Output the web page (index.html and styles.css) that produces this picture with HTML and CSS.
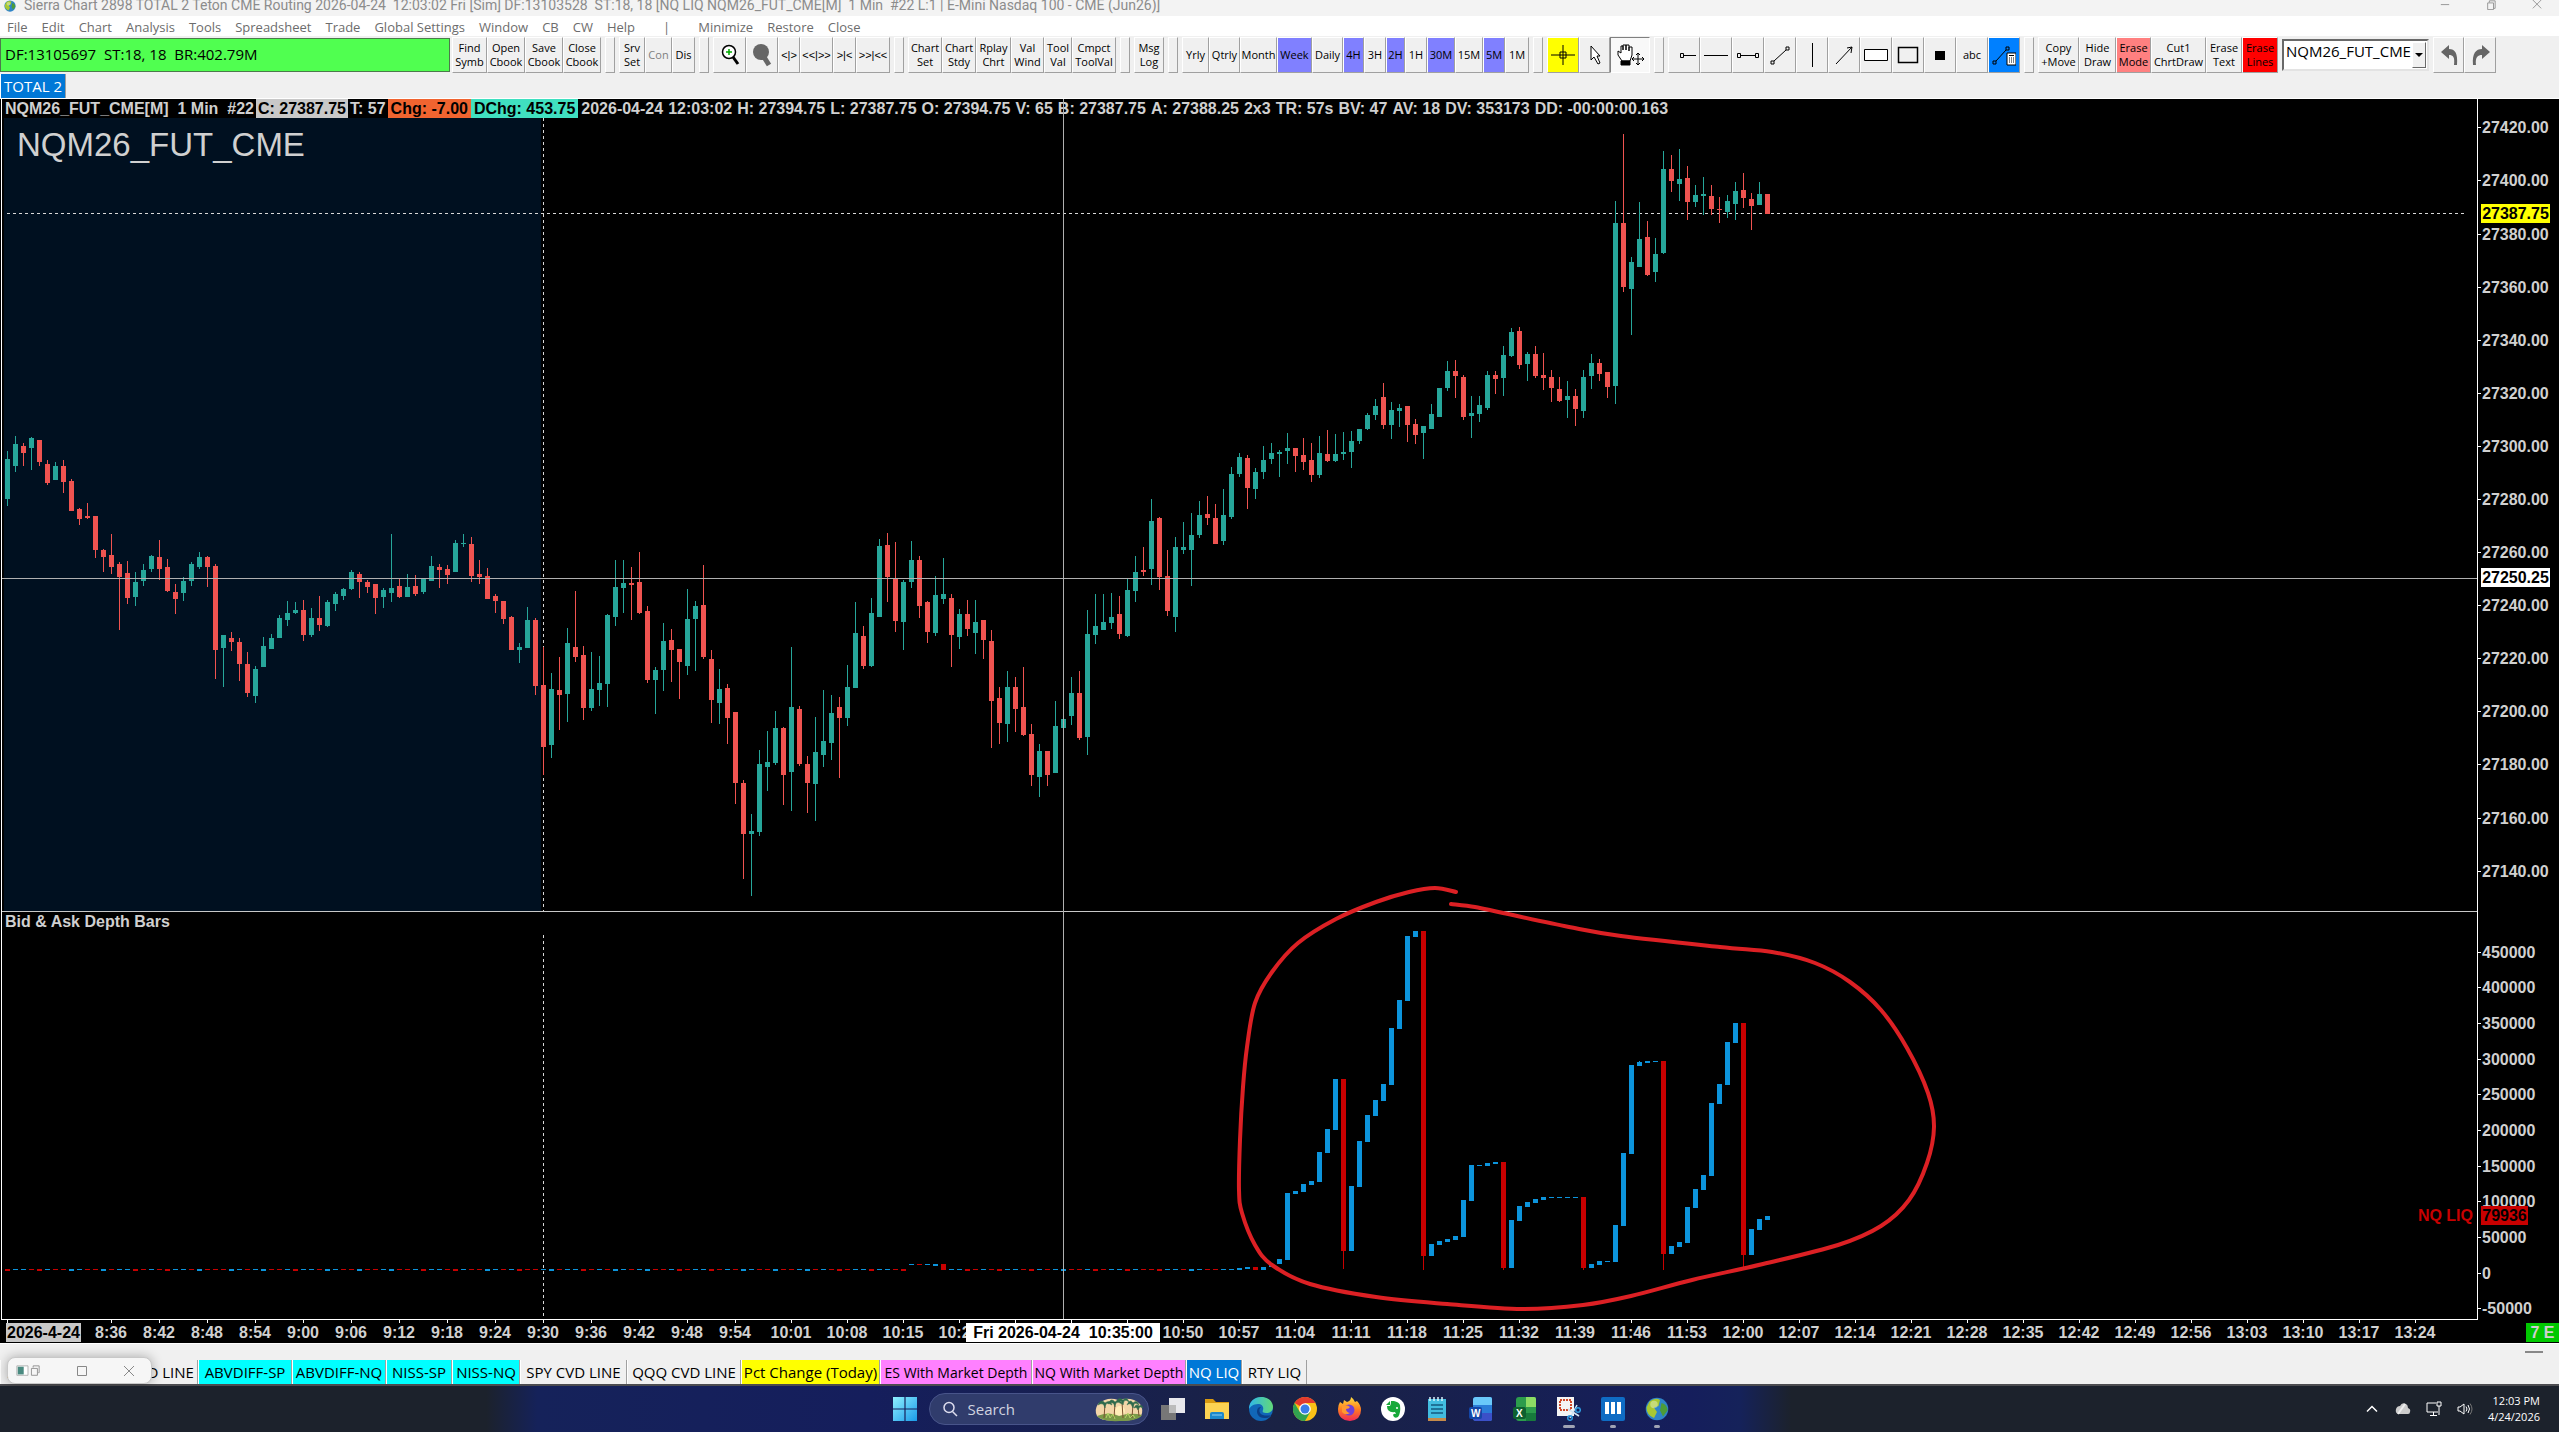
FILE: index.html
```html
<!DOCTYPE html>
<html lang="en">

<head>
    <meta charset="UTF-8" />
    <meta name="viewport" content="width=device-width, initial-scale=1.0" />
    <title>Sierra Chart</title>
    <link rel="stylesheet" href="styles.css">
    <script src="script.js" defer></script>
</head>

<body>

    <header class="title_bar">
        <svg class="app_icon" viewBox="0 0 16 16"><use href="#globe" /></svg>
        <span class="title_text">Sierra Chart 2898 TOTAL 2 Teton CME Routing 2026-04-24&nbsp; 12:03:02 Fri [Sim] DF:13103528&nbsp; ST:18, 18 [NQ LIQ NQM26_FUT_CME[M]&nbsp; 1 Min&nbsp; #22 L:1 | E-Mini Nasdaq 100 - CME (Jun26)]</span>
        <div class="win_controls">
            <button aria-label="Minimize"><svg viewBox="0 0 12 12"><path d="M1 5.5h10" /></svg></button>
            <button aria-label="Restore"><svg viewBox="0 0 12 12"><path d="M2 3.5h7v8H2zM4 3V1h7v9H9.5" /></svg></button>
            <button aria-label="Close"><svg viewBox="0 0 12 12"><path d="M1 0l10 10M11 0L1 10" /></svg></button>
        </div>
    </header>

    <nav class="menu">
        <a href="#">File</a>
        <a href="#">Edit</a>
        <a href="#">Chart</a>
        <a href="#">Analysis</a>
        <a href="#">Tools</a>
        <a href="#">Spreadsheet</a>
        <a href="#">Trade</a>
        <a href="#">Global Settings</a>
        <a href="#">Window</a>
        <a href="#">CB</a>
        <a href="#">CW</a>
        <a href="#">Help</a>
        <span class="bar">|</span>
        <a href="#">Minimize</a>
        <a href="#">Restore</a>
        <a href="#">Close</a>
    </nav>

    <div class="toolbar">
        <div class="feed">DF:13105697&nbsp; ST:18, 18&nbsp; BR:402.79M</div>
        <div class="group cbook">
            <button>Find<br>Symb</button>
            <button>Open<br>Cbook</button>
            <button>Save<br>Cbook</button>
            <button>Close<br>Cbook</button>
        </div>
        <i class="grip"></i>
        <div class="group server">
            <button>Srv<br>Set</button>
            <button disabled>Con</button>
            <button>Dis</button>
        </div>
        <i class="grip"></i>
        <div class="group zoom">
            <button aria-label="Zoom in"><svg viewBox="0 0 24 24"><circle cx="11" cy="9" r="6.5" fill="#fff" stroke="#000" stroke-width="1.5" /><path d="M15 14l5 7" stroke="#000" stroke-width="3" /><path d="M8 9h6M11 6v6" stroke="#0a0" stroke-width="1.5" /></svg></button>
            <button aria-label="Zoom out"><svg viewBox="0 0 24 24"><circle cx="11" cy="9" r="8" fill="#666" /><path d="M14 14l5 8" stroke="#666" stroke-width="5" /></svg></button>
            <button>&lt;|&gt;</button>
            <button>&lt;&lt;|&gt;&gt;</button>
            <button>&gt;|&lt;</button>
            <button>&gt;&gt;|&lt;&lt;</button>
        </div>
        <i class="grip"></i>
        <div class="group chart_tools">
            <button>Chart<br>Set</button>
            <button>Chart<br>Stdy</button>
            <button>Rplay<br>Chrt</button>
            <button>Val<br>Wind</button>
            <button>Tool<br>Val</button>
            <button>Cmpct<br>ToolVal</button>
        </div>
        <i class="grip"></i>
        <div class="group log">
            <button>Msg<br>Log</button>
        </div>
        <i class="grip"></i>
        <div class="group periods">
            <button>Yrly</button>
            <button>Qtrly</button>
            <button>Month</button>
            <button class="violet">Week</button>
            <button>Daily</button>
            <button class="violet">4H</button>
            <button>3H</button>
            <button class="violet">2H</button>
            <button>1H</button>
            <button class="violet">30M</button>
            <button>15M</button>
            <button class="violet">5M</button>
            <button>1M</button>
        </div>
        <i class="grip"></i>
        <div class="group pointers">
            <button class="yellow" aria-label="Crosshair"><svg viewBox="0 0 24 24" class="ink"><path d="M0 12h24M12 2v20" /><path d="M9 9h6v6H9z" /></svg></button>
            <button aria-label="Pointer"><svg viewBox="0 0 24 24" class="ink"><path d="M8 3v14l3-3 4 7 2-1-3-7h3z" fill="#fff" /></svg></button>
            <button class="pressed" aria-label="Hand"><svg viewBox="0 0 32 24" class="ink"><path d="M8 18l-4-6V8l3 2V3h2v4-5h3v5-5h3v6-4h3v8l-2 6z" fill="#fff" /><path d="M7 18h9v4H7z" fill="#000" /><path d="M24 10v12M18 16h12M22 12l2-2 2 2M22 20l2 2 2-2M20 14l-2 2 2 2M28 14l2 2-2 2" /></svg></button>
        </div>
        <i class="grip"></i>
        <div class="group drawing">
            <button aria-label="Ray"><svg viewBox="0 0 24 24" class="ink"><path d="M8.5 10.5h3v4h-3zM12 12.5h12" /></svg></button>
            <button aria-label="Horizontal line"><svg viewBox="0 0 24 24" class="ink"><path d="M0 12.5h24" /></svg></button>
            <button aria-label="Segment"><svg viewBox="0 0 24 24" class="ink"><path d="M1.5 10.500h3v4h-3zM5 12.500h15M19.5 10.500h3v4h-3z" /></svg></button>
            <button aria-label="Trend line"><svg viewBox="0 0 24 24" class="ink"><path d="M3 18h3v3H3zM18 4h3v3h-3zM6 18L18 7" /></svg></button>
            <button aria-label="Vertical line"><svg viewBox="0 0 24 24" class="ink"><path d="M12.5 0v24" /></svg></button>
            <button aria-label="Arrow"><svg viewBox="0 0 24 24" class="ink"><path d="M4 21L20 4M15 5l5-1-1 6" /></svg></button>
            <button aria-label="Rectangle"><svg viewBox="0 0 24 24" class="ink"><path d="M.5 6.500h23v11H.5z" fill="#fff" /></svg></button>
            <button aria-label="Square"><svg viewBox="0 0 24 24" class="ink"><path d="M2.500 4.500h19v15h-19z" stroke-width="1.500" /></svg></button>
            <button aria-label="Marker"><svg viewBox="0 0 24 24"><path d="M7 8h10v9H7z" /></svg></button>
            <button>abc</button>
            <button class="blue" aria-label="Calculator"><svg viewBox="0 0 24 24" class="ink"><path d="M1 18h3v3H1zM14 4h3v3h-3zM4 18L14 7" /><path d="M15 10h9v12h-9z" fill="#fff" /><path d="M17 12.500h5M17 15h1M19 15h1M21 15h1M17 17h1M19 17h1M21 17h1M17 19h1M19 19h1M21 19h1" /></svg></button>
        </div>
        <i class="grip"></i>
        <div class="group edit">
            <button>Copy<br>+Move</button>
            <button>Hide<br>Draw</button>
            <button class="pink">Erase<br>Mode</button>
            <button>Cut1<br>ChrtDraw</button>
            <button>Erase<br>Text</button>
            <button class="red">Erase<br>Lines</button>
        </div>
        <div class="symbol">
            <select aria-label="Symbol">
                <option>NQM26_FUT_CME</option>
            </select>
            <i class="arrow"></i>
        </div>
        <div class="group history">
            <button aria-label="Undo"><svg viewBox="0 0 24 24"><path d="M4 9l8-7v4c6 0 9 4 8 16h-3c1-8-1-10-5-10v4z" fill="#666" /></svg></button>
            <button aria-label="Redo"><svg viewBox="0 0 24 24"><path d="M22 9l-8-7v4C8 6 4 10 5 22h3c-1-8 2-10 6-10v4z" fill="#666" /></svg></button>
        </div>
    </div>

    <div class="book_tabs">
        <button class="tab active">TOTAL 2</button>
    </div>

    <main class="chart">
        <div class="quote">
            <span>NQM26_FUT_CME[M]&nbsp; 1 Min&nbsp; #22</span>
            <span class="q_close">C: 27387.75</span>
            <span>T: 57</span>
            <span class="q_chg">Chg: -7.00</span>
            <span class="q_dchg">DChg: 453.75</span>
            <div class="fields">
                <b>2026-04-24</b>
                <b>12:03:02</b>
                <b>H: 27394.75</b>
                <b>L: 27387.75</b>
                <b>O: 27394.75</b>
                <b>V: 65</b>
                <b>B: 27387.75</b>
                <b>A: 27388.25</b>
                <b>2x3</b>
                <b>TR: 57s</b>
                <b>BV: 47</b>
                <b>AV: 18</b>
                <b>DV: 353173</b>
                <b>DD: -00:00:00.163</b>
            </div>
        </div>
        <svg id="plot" class="plot" viewBox="0 99 2559 1244" preserveAspectRatio="xMinYMin meet"></svg>
    </main>

    <footer class="sheets">
        <button class="sheet_min" aria-label="Minimize sheet"></button>
        <div class="sheet_tabs">
            <button class="tab">ES CVD LINE</button>
            <button class="tab">NQ CVD LINE</button>
            <button class="tab cyan">ABVDIFF-SP</button>
            <button class="tab cyan">ABVDIFF-NQ</button>
            <button class="tab cyan">NISS-SP</button>
            <button class="tab cyan">NISS-NQ</button>
            <button class="tab">SPY CVD LINE</button>
            <button class="tab">QQQ CVD LINE</button>
            <button class="tab yellow">Pct Change (Today)</button>
            <button class="tab magenta">ES With Market Depth</button>
            <button class="tab magenta">NQ With Market Depth</button>
            <button class="tab active">NQ LIQ</button>
            <button class="tab">RTY LIQ</button>
        </div>
        <div class="mini_window">
            <svg viewBox="0 0 28 14"><path d="M1 1h13v11H1z" fill="#fff" stroke="#aaa" /><path d="M2 2h7v9H2z" fill="#4a8a80" /><path d="M18 4h7v8h-7zM20 3V1h7v8h-1" fill="none" stroke="#888" /></svg>
            <svg viewBox="0 0 12 12"><path d="M1.500 1.500h9v9h-9z" fill="none" stroke="#888" /></svg>
            <svg viewBox="0 0 12 12"><path d="M1 1l10 10M11 1L1 11" stroke="#888" /></svg>
        </div>
    </footer>

    <div class="taskbar">
        <div class="apps">
            <button aria-label="Start"><svg viewBox="0 0 24 24"><defs><linearGradient id="win" x2="1" y2="1"><stop stop-color="#8ff0ff" /><stop offset="1" stop-color="#1a9ae8" /></linearGradient></defs><path d="M0 0h11.400v11.400H0zM12.600 0H24v11.400H12.600zM0 12.600h11.400V24H0zM12.600 12.600H24V24H12.600z" fill="url(#win)" /></svg></button>
            <label class="search">
                <svg viewBox="0 0 16 16"><circle cx="7" cy="6.500" r="5" fill="none" stroke="#dde" stroke-width="1.500" /><path d="M10.500 10.500L15 15" stroke="#dde" stroke-width="1.500" /></svg>
                <input type="text" placeholder="Search">
                <svg class="palms" viewBox="0 0 50 26">
                    <path d="M4 8q10-8 20-4 14-4 22 4 4 6 1 12-10 6-22 4Q8 26 3 20 0 14 4 8z" fill="#f3d6a8" />
                    <circle cx="26" cy="15" r="5" fill="#ffedb8" />
                    <path d="M3 20q12-5 22 0 12-4 23-1-4 6-22 6Q8 26 3 20z" fill="#7a9a48" />
                    <path d="M10 22L11 8M20 22l1-15M29 22l-1-16M38 22l1-14M45 20l-1-9" stroke="#7c5230" />
                    <path d="M4 9q3-7 7-2 5-4 7 2-4-3-6-1-1 2-1 4-1-3-2-4-2-1-5 1zM14 8q3-7 7-2 5-4 7 2-4-3-6-1-1 2-1 4-1-3-2-4-2-1-5 1zM22 6q3-6 7-2 4-4 6 2-3-3-5-1l-1 4-2-4q-2-1-5 1zM33 9q3-7 6-2 4-4 6 2-3-3-5-1l-1 4-2-4q-2-1-4 1zM40 12q2-5 5-2 3-2 4 2-3-2-4 0l-1 2-1-2q-1-1-3 0z" fill="#2e6a4c" stroke="#2e6a4c" stroke-width=".5" />
                    <path d="M12 22l2-5 2 5 3-4 2 5M31 22l3-5 2 5 3-3 2 3" stroke="#b8d468" fill="none" />
                </svg>
            </label>
            <button aria-label="Task view"><svg viewBox="0 0 24 24"><path d="M8 1h16v15H8z" fill="#e8e8ec" /><path d="M0 8h15v15H0z" fill="#777" /><path d="M8 8h7v8H8z" fill="#bbb" /></svg></button>
            <button aria-label="Explorer"><svg viewBox="0 0 24 24"><path d="M0 2h8l3 3h13v6H0z" fill="#d99a10" /><path d="M0 6h24v16H0z" fill="#fcd353" /><path d="M5 22v-5q0-2 2-2h10q2 0 2 2v5z" fill="#1c88cc" /><path d="M7 18h10" stroke="#8ed0f4" /></svg></button>
            <button aria-label="Edge"><svg viewBox="0 0 24 24"><defs><linearGradient id="edge" x2="1"><stop stop-color="#30b7e8" /><stop offset="1" stop-color="#62d878" /></linearGradient></defs><circle cx="12" cy="12" r="12" fill="#1167b8" /><path d="M0 12C0 4 6 0 12 0c8 0 12 5 12 10 0 4-3 6-7 6-3 0-4-1-3-3 1-3-1-6-5-6-5 0-8 3-9 5z" fill="url(#edge)" /><path d="M9 11c-3 5 1 11 8 10 3 0 4-2 5-3-3 1-9 1-11-2-1-2-1-4 1-6-1 0-2 0-3 1z" fill="#0c3f86" /></svg></button>
            <button aria-label="Chrome"><svg viewBox="0 0 24 24"><circle cx="12" cy="12" r="12" fill="#fbc116" /><path d="M12 12L1.600 6A12 12 0 0 1 22.400 6H12z" fill="#e33b2e" /><path d="M1.600 6A12 12 0 0 0 12 24l5.200-9H6.800z" fill="#31a350" /><circle cx="12" cy="12" r="5.800" fill="#fff" /><circle cx="12" cy="12" r="4.500" fill="#3b7de9" /></svg></button>
            <button aria-label="Firefox"><svg viewBox="0 0 24 24"><defs><linearGradient id="fox" x2="0" y2="1"><stop stop-color="#ffe040" /><stop offset=".5" stop-color="#ff8020" /><stop offset="1" stop-color="#f02858" /></linearGradient></defs><path d="M3 5l3 2 1-4 3 2q4-1 4-5 3 2 4 5l2-1q4 4 4 9 0 10-11 11Q1 23 1 12q0-4 2-7z" fill="url(#fox)" /><circle cx="12" cy="13" r="5.500" fill="#7140d8" /><path d="M5 9q5-2 8 1-1 2-4 2 0 3 4 4-5 3-8-1z" fill="#ff9a30" /></svg></button>
            <button aria-label="Evernote"><svg viewBox="0 0 24 24"><circle cx="12" cy="12" r="12" fill="#fff" /><path d="M10 4h3q5 1 6 4 1 8-2 12-4 2-5-2 1-2 3-1l-1-2q-8 1-8-6h3q1-1 1-5z" fill="#18a83a" /><path d="M9 4v4H5z" fill="#18a83a" /><circle cx="16" cy="11" r="1" fill="#fff" /></svg></button>
            <button aria-label="Notepad"><svg viewBox="0 0 24 24"><path d="M3 2h18v20H3z" fill="#42bce0" /><path d="M3 21h18v3H3z" fill="#c58a4a" /><path d="M5 0v4M9 0v4M13 0v4M17 0v4" stroke="#d8f4fc" stroke-width="1.500" /><path d="M6 8h12M6 12h12M6 16h12" stroke="#155a80" stroke-width="1.500" /></svg></button>
            <button aria-label="Word"><svg viewBox="0 0 24 24"><path d="M4 3q0-3 3-3h14q2 0 2 2v20q0 2-2 2H7q-3 0-3-3z" fill="#2b7cd8" /><path d="M4 3q0-3 3-3h14q2 0 2 2v6H4z" fill="#6ac8fa" /><path d="M4 16h19v6q0 2-2 2H7q-3 0-3-3z" fill="#3b50c8" /><rect y="10" width="13" height="12" rx="2" fill="#1446a8" /><text x="2" y="20">W</text></svg></button>
            <button aria-label="Excel"><svg viewBox="0 0 24 24"><path d="M3 3q0-3 3-3h15q2 0 2 2v20q0 2-2 2H6q-3 0-3-3z" fill="#2c9c4c" /><path d="M13 0h8q2 0 2 2v8H13z" fill="#8cdc64" /><path d="M13 16h10v6q0 2-2 2h-8z" fill="#177a3c" /><rect y="10" width="13" height="12" rx="2" fill="#0e6030" /><text x="3" y="20">X</text></svg></button>
            <button class="open wide" aria-label="Snipping Tool"><svg viewBox="0 0 24 24"><path d="M0 0h17v19H0z" fill="#f4f4f4" /><path d="M3 3h11v10H3z" fill="none" stroke="#d04828" stroke-width="2" stroke-dasharray="2 1" /><path d="M20 8l-7 13M11 12l11 7" stroke="#cfe4f4" stroke-width="1.500" /><circle cx="13" cy="21" r="2.300" fill="none" stroke="#2f9be0" stroke-width="1.500" /><circle cx="21" cy="13" r="2.300" fill="none" stroke="#2f9be0" stroke-width="1.500" /></svg></button>
            <button class="open" aria-label="Panels"><svg viewBox="0 0 24 24"><rect width="24" height="24" rx="2" fill="#0f6cc4" /><path d="M6 5v12M12 5v12M18 5v12" stroke="#fff" stroke-width="4" /></svg></button>
            <button class="open" aria-label="Sierra Chart"><svg viewBox="0 0 16 16">
                    <symbol id="globe" viewBox="0 0 16 16">
                        <circle cx="8" cy="8" r="7.500" fill="#2f84c8" />
                        <path d="M3 3q4-3 7-1l-1 4-3 1 2 3-2 4Q1 12 1 7z" fill="#a8c832" />
                        <path d="M11 4q4 1 4 5l-3 4-2-4z" fill="#4c9c38" />
                        <circle cx="6" cy="5" r="2.500" fill="#fff" opacity=".35" />
                    </symbol>
                    <use href="#globe" />
                </svg></button>
        </div>
        <div class="tray">
            <svg viewBox="0 0 16 16"><path d="M3 10.500l5-5 5 5" fill="none" stroke="#fff" stroke-width="1.500" /></svg>
            <svg viewBox="0 0 16 16"><path d="M3 13q-3-1-2-5 1-3 4-3 2-4 6-2 2 1 2 4 3 1 2 4 0 2-2 2z" fill="#ccc" /><path d="M3 13l7-10" stroke="#eee" stroke-width="2" /></svg>
            <svg viewBox="0 0 16 16"><path d="M10 2H1v9h11M4 14.500h7M7.500 11v3M11 1h4v4h-4zM13 5v9" fill="none" stroke="#fff" /></svg>
            <svg viewBox="0 0 16 16"><path d="M1 6h2l4-3v10L3 10H1zM9 5.500q2 2.500 0 5M11 4q3 4 0 8" fill="none" stroke="#fff" /><path d="M13 2.500q4 5.500 0 11" fill="none" stroke="#777" /></svg>
            <div class="clock">12:03 PM<br>4/24/2026</div>
        </div>
    </div>

</body>

</html>
```

FILE: styles.css
```css
:root {
    --panel: #f0f0f0;
    --edge: #a0a0a0;
    --up: #26a69a;
    --down: #ef5350;
    --label: #d0d0d0;
}

* {
    box-sizing: border-box;
}

body {
    margin: 0;
    min-height: 100vh;
    display: flex;
    flex-direction: column;
    background-color: var(--panel);
    font-family: 'Open Sans', 'Noto Sans', sans-serif;
    font-size: 13px;
    overflow: hidden;
}

button {
    font: inherit;
    color: #000;
    margin: 0;
    padding: 0;
    border: 0;
    background: none;
}

/* title and menu */

.title_bar {
    display: flex;
    align-items: flex-start;
    gap: 6px;
    height: 16px;
    padding: 0 16px 0 2px;
    background-color: #f3f3f3;
    color: #8c8c8c;
    font-family: Roboto, sans-serif;
    font-size: 14px;
    line-height: 11px;
}

.app_icon {
    width: 16px;
    height: 12px;
}

.title_text {
    flex-grow: 1;
    white-space: nowrap;
}

.win_controls {
    display: flex;
    gap: 34px;
}

.win_controls svg {
    display: block;
    width: 12px;
    height: 10px;
    fill: none;
    stroke: #888;
}

.menu {
    display: flex;
    gap: 14px;
    height: 20px;
    padding-left: 7px;
    background-color: #fff;
    line-height: 22px;
}

.menu a {
    color: #6c6c6c;
    text-decoration: none;
}

.menu .bar {
    color: #6c6c6c;
    margin: 0 14px;
}

/* toolbar */

.toolbar {
    display: flex;
    align-items: center;
    height: 38px;
    font-size: 11px;
    line-height: 14px;
}

.feed {
    width: 450px;
    height: 34px;
    margin-right: 2px;
    padding-left: 4px;
    border: 1px solid #4c7a4c;
    background-color: #50ff50;
    font-size: 15px;
    line-height: 31px;
}

.group {
    display: grid;
    height: 36px;
}

.group button {
    display: flex;
    align-items: center;
    justify-content: center;
    border: 1px solid #fff;
    border-right-color: var(--edge);
    border-bottom-color: var(--edge);
    white-space: nowrap;
    text-align: center;
}

.group button:disabled {
    color: #808080;
}

.group svg {
    width: 24px;
    height: 24px;
}

.group .pressed svg {
    width: 32px;
}

.ink {
    fill: none;
    stroke: #000;
}

.zoom { font-family: 'Liberation Sans', sans-serif; }

.cbook { grid-template-columns: 35px 38px 38px 38px; }
.server { grid-template-columns: 26px 27px 23px; }
.zoom { grid-template-columns: 33px 32px 22px 33px 23px 34px; }
.chart_tools { grid-template-columns: 34px 34px 35px 33px 28px 44px; }
.log { grid-template-columns: 30px; }
.periods { grid-template-columns: 27px 31px 37px 35px 31px 21px 22px 19px 22px 28px 28px 22px 24px; }
.pointers { grid-template-columns: 32px 31px 40px; }
.drawing { grid-template-columns: repeat(11, 32px); }
.edit { grid-template-columns: 41px 37px 35px 55px 36px 36px; }
.history { grid-template-columns: 31px 32px; }

.group .violet { background-color: #8080ff; }
.group .yellow { background-color: #ff0; }
.group .blue { background-color: #0080ff; }
.group .pink { background-color: #ff8080; }
.group .red { background-color: #f00; }

.group .pressed {
    background-color: #f8f8f8;
    border-color: #808080 #fff #fff #808080;
}

.grip {
    width: 10px;
    height: 36px;
    margin: 0 4px;
    border: 1px solid #fff;
    border-right-color: var(--edge);
    border-bottom-color: var(--edge);
}

.symbol {
    display: flex;
    width: 147px;
    height: 32px;
    margin: 0 4px;
    padding: 1px;
    border: 2px solid #696969;
    border-right-color: #e3e3e3;
    border-bottom-color: #e3e3e3;
    background-color: #fff;
}

.symbol select {
    appearance: none;
    flex-grow: 1;
    min-width: 0;
    border: 0;
    padding: 0 0 8px 1px;
    background: none;
    color: #000;
    font: 15px/18px 'Open Sans', sans-serif;
}

.symbol .arrow {
    display: flex;
    align-items: center;
    justify-content: center;
    width: 14px;
    background-color: var(--panel);
    border: 1px solid #fff;
    border-right-color: #696969;
    border-bottom-color: #696969;
}

.symbol .arrow::after {
    content: "";
    border: 4px solid transparent;
    border-top-color: #000;
    border-bottom-width: 0;
}

/* tabs */

.book_tabs {
    display: flex;
    height: 25px;
    border-bottom: 1px solid #fff;
}

.tab {
    border-right: 1px solid var(--edge);
    border-left: 1px solid #fff;
    font-size: 15px;
    white-space: nowrap;
    overflow: hidden;
}

.book_tabs .tab {
    width: 66px;
}

.tab.active {
    background-color: #0078d7;
    color: #fff;
}

.tab.cyan { background-color: #0ff; }
.tab.yellow { background-color: #ff0; }

.tab.magenta {
    background-color: #ff80ff;
    font-size: 14px;
}

/* chart */

.chart {
    position: relative;
    flex-grow: 1;
    background-color: #000;
    font: bold 16px 'Liberation Sans', Arial, sans-serif;
    color: var(--label);
}

.quote {
    position: absolute;
    top: 0;
    left: 3px;
    display: flex;
    white-space: nowrap;
    line-height: 19px;
}

.quote span {
    padding: 0 2px;
}

.quote .q_close { background-color: #c8c8c8; color: #000; }
.quote .q_chg { background-color: #f06430; color: #000; }
.quote .q_dchg { background-color: #40e0c0; color: #000; }

.quote .q_chg,
.quote .q_dchg {
    padding: 0 3px;
}

.fields {
    display: flex;
    gap: 5px;
    padding-left: 3px;
}

.plot {
    position: relative;
    display: block;
    width: 100%;
}

.plot text {
    fill: var(--label);
    dominant-baseline: central;
}

.plot .symbol_name {
    font-size: 33px;
    font-weight: normal;
}

.plot .on_light { fill: #000; }
.plot .study_name { fill: #c80000; }
.plot .mid { text-anchor: middle; }
.plot .end { text-anchor: end; }

.plot rect,
.plot line {
    shape-rendering: crispEdges;
}

.plot .night { fill: #001020; }
.plot .up { fill: var(--up); }
.plot .down { fill: var(--down); }
.plot .bid { fill: #0c94dc; }
.plot .ask { fill: #c80000; }
.plot .axis { stroke: #fff; }
.plot .split { stroke: #c8c8c8; }
.plot .cross { stroke: #b0b0b0; }

.plot .dash {
    stroke: #d8d8d8;
    stroke-dasharray: 3 3;
}

.plot .pen {
    fill: none;
    stroke: #dc2024;
    stroke-width: 4;
    stroke-linecap: round;
}

/* sheet tabs */

.sheets {
    position: relative;
    display: flex;
    flex-direction: column;
    align-items: flex-end;
    justify-content: space-between;
    height: 43px;
    border-top: 1px solid #fff;
    border-bottom: 2px solid #4c4c50;
}

.sheet_min {
    width: 18px;
    height: 2px;
    margin: 7px 16px 0 0;
    background-color: #888;
}

.sheet_tabs {
    display: grid;
    grid-template-columns: 98px 100px 94px 94px 66px 68px 107px 114px 139px 152px 154px 56px 65px;
    width: 100%;
    height: 24px;
}

.mini_window {
    position: absolute;
    left: 7px;
    bottom: 0;
    display: flex;
    align-items: center;
    justify-content: space-between;
    width: 145px;
    height: 27px;
    padding: 0 16px 0 8px;
    border: 1px solid #c8c8c8;
    border-radius: 8px;
    background-color: #f6f6f6;
    box-shadow: 0 0 12px rgba(0, 0, 0, 0.3);
}

.mini_window svg {
    height: 12px;
}

/* taskbar */

.taskbar {
    position: relative;
    display: flex;
    align-items: center;
    justify-content: center;
    height: 46px;
    background: linear-gradient(90deg, #1c222c 19%, #15225a 21%, #151e5c 34%, #1a2244 50%, #151e5c 66%, #15225a 68%, #1c222c 70%);
    color: #fff;
}

.apps {
    display: flex;
    align-items: center;
    gap: 20px;
    padding-left: 2px;
}

.apps button {
    position: relative;
    width: 24px;
    height: 24px;
}

.apps button svg {
    display: block;
    width: 24px;
    height: 24px;
}

.apps text {
    font: bold 10px 'Liberation Sans', sans-serif;
    fill: #fff;
}

.apps .open::after {
    content: "";
    position: absolute;
    left: 9px;
    top: 28px;
    width: 6px;
    height: 3px;
    border-radius: 2px;
    background-color: #a0a4b4;
}

.apps .wide::after {
    left: 6px;
    width: 12px;
}

.search {
    display: flex;
    align-items: center;
    gap: 10px;
    width: 220px;
    height: 32px;
    margin: 0 -8px;
    padding: 0 4px 0 12px;
    border: 1px solid #48548a;
    border-radius: 16px;
    background-color: #303c6c;
}

.search svg {
    width: 16px;
    height: 16px;
}

.search input {
    flex: 1;
    min-width: 0;
    padding: 0;
    border: 0;
    background: none;
    color: #fff;
    font: 15px 'Open Sans', sans-serif;
}

.search input::placeholder {
    color: #d0d4e0;
}

.search .palms {
    width: 50px;
    height: 26px;
}

.tray {
    position: absolute;
    right: 19px;
    display: flex;
    align-items: center;
    gap: 15px;
}

.tray svg {
    width: 16px;
    height: 16px;
}

.clock {
    font-size: 11px;
    line-height: 16px;
    text-align: right;
}
```

FILE: script.js
```js
const plot = document.getElementById('plot');
const NS = 'http://www.w3.org/2000/svg';

function add(tag, attrs, text) {
    const el = document.createElementNS(NS, tag);
    for (const key in attrs) el.setAttribute(key, attrs[key]);
    if (text !== undefined) el.textContent = text;
    plot.appendChild(el);
}

const barX = i => 7 + i * 8;
const priceY = p => 578.5 + (27250.25 - p) * 2.6545;
const depthY = d => 1273 - d / 50000 * 35.64;

function line(x1, y1, x2, y2, cls) {
    add('line', { x1, y1, x2, y2, class: cls });
}

// rows are "direction high top bottom low", three units to a pixel below base
function bars(first, base, rows, up, down) {
    rows.trim().split('\n').forEach((row, n) => {
        const [dir, ...v] = row.trim().split(' ');
        const [high, top, bottom, low] = v.map(k => Math.round(base + k / 3));
        const cls = dir === 'g' ? up : down;
        const x = barX(first + n);
        add('rect', { x, y: high, width: 1, height: low - high, class: cls });
        add('rect', { x: x - 2, y: top, width: 5, height: Math.max(1, bottom - top), class: cls });
    });
}

add('rect', { x: 4, y: 118, width: 537, height: 793, class: 'night' });
add('text', { x: 17, y: 144, class: 'symbol_name' }, 'NQM26_FUT_CME');
add('text', { x: 5, y: 921 }, 'Bid & Ask Depth Bars');

line(543.5, 118, 543.5, 911, 'dash');
line(543.5, 935, 543.5, 1319, 'dash');
line(7, 213.5, 2466, 213.5, 'dash');

bars(0, 400, `g 153 177 297 318
g 108 132 198 216
r 129 138 159 198
g 111 114 144 210
r 120 120 186 198
r 180 192 249 255
g 186 198 240 240
r 180 198 246 279
r 237 243 333 333
r 324 327 357 375
r 309 348 354 357
r 348 348 450 474
r 447 450 471 516
r 402 465 501 522
r 486 492 531 690
r 483 519 594 612
g 516 546 591 618
g 492 510 543 558
g 465 468 507 516
r 420 471 507 540
r 477 501 573 576
r 552 576 597 642
g 531 543 579 603
g 486 492 543 558
g 456 471 501 507
r 468 471 501 561
r 492 498 750 837
g 705 705 744 861
r 696 714 726 753
r 714 726 792 843
r 756 792 879 891
g 798 807 888 909
g 711 738 801 801
g 702 714 747 747
g 645 654 714 714
g 603 639 660 678
g 606 630 639 642
r 600 630 705 723
g 624 654 705 711
r 588 654 675 693
g 600 606 678 681
g 576 582 612 633
g 564 567 588 600
g 510 516 567 570
r 516 522 546 594
r 540 546 561 579
r 552 552 594 642
g 564 570 591 624
g 402 564 579 606
r 534 558 591 594
g 522 561 591 591
r 525 558 582 588
g 534 537 576 582
g 468 498 543 543
r 492 501 510 564
r 495 507 525 552
g 420 429 516 516
g 402 429 432 441
r 411 432 528 546
r 480 522 531 552
r 504 528 597 597
r 582 588 603 639
r 603 603 657 672
r 648 651 750 750
g 729 741 750 789
g 621 660 744 744
r 654 660 858 885`, 'up', 'down');

bars(67, 500, `r 441 555 741 825
g 519 567 735 774
r 471 570 585 690
g 384 429 582 666
r 273 441 471 486
r 438 465 624 660
g 456 567 624 633
g 468 549 570 618
g 342 345 552 621
g 180 261 351 378
g 180 249 264 339
r 201 249 255 360
r 156 246 339 342
r 318 333 540 549
g 501 510 540 642
g 369 423 510 573
r 387 420 450 546
r 447 447 486 597
g 267 357 498 525
g 303 318 357 513
r 195 315 471 477
r 450 477 600 669
g 507 567 609 672
r 552 564 654 732
r 636 636 849 912
r 840 849 1002 1137
g 942 993 1002 1188
g 750 792 996 1008
g 693 786 801 873
g 633 684 789 795
r 681 684 825 915
g 441 621 816 933
r 618 627 792 798
r 768 792 849 939
g 651 756 852 963
g 570 723 765 801
g 585 639 729 780
r 591 621 654 834
g 495 561 654 678
g 306 399 564 564
r 378 408 498 507
g 294 339 498 501
g 117 138 351 351
r 99 135 231 306
r 126 237 363 396
g 240 246 366 450
g 123 180 246 264
r 168 180 318 354
r 303 306 396 429
g 228 285 399 408
g 174 282 297 312
r 282 294 405 501
g 327 342 411 447
r 300 342 387 408
g 300 366 399 462
r 360 360 420 477
r 390 423 603 744
r 561 594 669 732
g 513 561 672 726
r 531 561 627 696
r 501 621 705 708
r 672 702 825 858
g 732 753 831 891
r 753 753 825 858
g 603 678 819 819
g 606 657 684 738
g 531 579 648 675
r 513 579 714 720
g 330 402 711 765
g 282 378 405 432
g 282 366 390 390
g 279 351 369 387
r 288 342 402 417
g 237 270 408 411`, 'up', 'down');

bars(141, 440, `g 348 396 453 486
r 321 390 396 408
g 177 243 387 435
r 231 234 411 450
r 330 408 513 528
g 291 321 531 576
g 246 321 330 342
g 219 285 330 438
g 183 225 285 294
r 168 222 234 255
r 192 234 312 312
g 147 225 303 315
g 81 102 231 237
g 39 51 102 111
r 45 54 144 207
g 84 96 147 177
g 18 60 96 117
g 9 39 57 72
g 30 36 42 111
g -21 24 33 72
r 24 24 48 96
r -6 45 66 90
r 9 60 105 126
g -12 39 105 114
r -30 42 63 66
g -18 42 63 66
g -24 36 42 60
g -27 3 36 84
g -33 -33 3 12
g -81 -75 -33 -30
g -123 -102 -75 -60`, 'up', 'down');

bars(172, 120, `r 789 831 915 927
g 846 870 915 957
g 852 864 873 921
r 858 858 915 966
r 897 912 945 972
g 918 918 939 1017
g 852 882 927 927
g 804 804 891 891
g 723 753 804 813
r 720 753 768 834
r 765 771 891 900
g 828 879 888 954
g 828 855 882 906
g 753 765 864 870
r 753 765 777 822
g 678 705 774 828
g 624 636 708 711
r 621 633 735 747
g 696 702 732 783
r 678 702 768 774
r 699 765 774 810
r 750 771 804 846
r 771 807 843 846
g 783 828 840 894
r 807 828 867 918
g 750 771 873 894
g 702 729 768 807
r 717 729 762 783
r 756 756 801 834
g 243 309 798 852
r 42 309 501 516
g 411 426 507 645
g 246 357 441 441
r 303 351 465 468
g 354 402 456 486
g 93 147 399 402
r 105 147 183 216
g 87 177 192 243
r 138 174 246 300
g 195 225 246 261
g 171 222 228 285
r 195 228 267 285
r 231 267 270 309
g 225 243 276 294
g 186 213 252 300
r 159 210 234 264
r 219 237 258 330
g 186 222 255 255
r 222 222 282 282`, 'up', 'down');

// quiet part of the depth study, r and g per bar
const quiet = 'rggrrgrrggrrgrggrrgrrggrgrrrggrggrrgrgg';
for (let i = 0; i < 152; i++) {
    const bump = i >= 113 && i <= 116;
    const cls = quiet[i % quiet.length] === 'g' ? 'bid' : 'ask';
    add('rect', { x: barX(i) - 2, y: bump ? 1264 : 1269, width: 5, height: i % 4 ? 1 : 2, class: cls });
}
add('rect', { x: barX(117) - 2, y: 1264, width: 5, height: 6, class: 'ask' });

bars(152, 880, `g 1167 1167 1170 1170
g 1167 1167 1170 1170
g 1164 1164 1170 1170
g 1161 1161 1167 1167
r 1161 1161 1170 1170
g 1161 1161 1170 1170
g 1152 1152 1162 1162
g 1137 1137 1152 1152
g 939 939 1140 1140
g 933 933 942 942
g 912 912 936 936
g 903 903 915 915
g 816 816 906 906
g 747 747 819 819
g 597 597 750 750
r 597 597 1113 1167
g 918 918 1113 1113
g 783 783 921 921
g 705 705 786 786
g 660 660 708 708
g 612 612 663 663
g 444 444 615 615
g 360 360 447 447
g 168 168 363 363
g 153 153 171 171
r 153 153 1128 1170
g 1092 1092 1128 1128
g 1083 1083 1095 1095
g 1077 1077 1086 1086
g 1068 1068 1080 1080
g 960 960 1071 1071
g 855 855 963 963
g 855 855 858 858
g 849 849 858 858
g 846 846 852 852
r 846 846 1164 1170
g 1020 1020 1164 1164
g 978 978 1023 1023
g 966 966 981 981
g 957 957 969 969
g 951 951 960 960
g 951 951 954 954
g 951 951 954 954
g 951 951 954 954
g 951 951 954 954
r 951 951 1164 1170
g 1152 1152 1164 1164
g 1143 1143 1155 1155
g 1143 1143 1146 1146
g 1035 1035 1146 1146
g 819 819 1038 1038
g 555 555 822 822
g 543 546 558 558
g 543 543 549 549
g 543 543 546 546
r 543 543 1122 1170
g 1098 1098 1122 1122
g 1086 1086 1101 1101
g 981 981 1089 1089
g 927 927 984 984
g 885 885 930 930
g 669 669 888 888
g 612 612 672 672
g 486 486 615 615
g 429 429 489 489
r 429 429 1125 1162
g 1047 1047 1125 1125
g 1017 1017 1050 1050
g 1008 1008 1020 1020`, 'bid', 'ask');

// panel frame and crosshair
line(1, 911.5, 2477, 911.5, 'split');
line(1, 578.5, 2477, 578.5, 'cross');
line(1063.5, 99, 1063.5, 1319, 'cross');
line(1.5, 99, 1.5, 1319, 'axis');
line(2477.5, 99, 2477.5, 1320, 'axis');
line(1, 1319.5, 2478, 1319.5, 'axis');

// value axes
for (let p = 27420; p >= 27140; p -= 20) {
    line(2478, priceY(p), 2481, priceY(p), 'axis');
    add('text', { x: 2482, y: priceY(p) }, p.toFixed(2));
}
for (let d = 450000; d >= -50000; d -= 50000) {
    line(2478, depthY(d), 2481, depthY(d), 'axis');
    add('text', { x: 2482, y: depthY(d) }, d);
}

function tag(x, y, width, fill, text, cls) {
    add('rect', { x, y: y - 9, width, height: 19, fill });
    add('text', { x: x + width / 2, y, class: 'mid ' + cls }, text);
}

tag(2481, 213, 69, '#ffff00', '27387.75', 'on_light');
tag(2481, 577, 69, '#ffffff', '27250.25', 'on_light');
tag(2481, 1215, 47, '#c80000', '79936', 'on_light');
add('text', { x: 2473, y: 1215, class: 'study_name end' }, 'NQ LIQ');

// time axis, bar 0 is 8:23
const cursorBar = 132;
function timeLabel(i) {
    const t = 8 * 60 + 23 + i;
    const text = Math.floor(t / 60) + ':' + String(t % 60).padStart(2, '0');
    line(barX(i) + 0.5, 1320, barX(i) + 0.5, 1323, 'axis');
    // no text where the cursor tag covers it
    if (Math.abs(i - cursorBar) < 10) return;
    add('text', { x: barX(i), y: 1332, class: 'mid' }, text);
}
for (let i = 13; i <= 91; i += 6) timeLabel(i);
for (let i = 98; i <= 301; i += 7) timeLabel(i);
line(7.5, 1320, 7.5, 1323, 'axis');
tag(6, 1332, 75, '#c8c8c8', '2026-4-24', 'on_light');
tag(966, 1332, 194, '#ffffff', 'Fri 2026-04-24\u00a0 10:35:00', 'on_light');
tag(2526, 1332, 33, '#00c800', '7 E', '');

// freehand loop around the depth spikes
const loop = [[1456, 892], [1435, 888], [1409, 892], [1376, 902], [1336, 919], [1298, 943], [1272, 972], [1255, 1003],
[1247, 1047], [1243, 1087], [1240, 1140], [1239, 1190], [1242, 1213], [1255, 1245], [1272, 1265], [1310, 1284],
[1376, 1297], [1447, 1304], [1522, 1309], [1583, 1305], [1631, 1296], [1692, 1280], [1763, 1264], [1838, 1245],
[1881, 1226], [1909, 1200], [1927, 1163], [1934, 1127], [1928, 1093], [1907, 1048], [1881, 1010], [1850, 982],
[1815, 963], [1772, 952], [1720, 947], [1621, 936], [1569, 927], [1503, 913], [1475, 907], [1451, 904]];
let d = 'M' + loop[0];
for (let i = 0; i < loop.length - 1; i++) {
    const a = loop[i - 1] || loop[i], b = loop[i], c = loop[i + 1], e = loop[i + 2] || c;
    d += ` C${b[0] + (c[0] - a[0]) / 6} ${b[1] + (c[1] - a[1]) / 6} ${c[0] - (e[0] - b[0]) / 6} ${c[1] - (e[1] - b[1]) / 6} ${c[0]} ${c[1]}`;
}
add('path', { d, class: 'pen' });
```
